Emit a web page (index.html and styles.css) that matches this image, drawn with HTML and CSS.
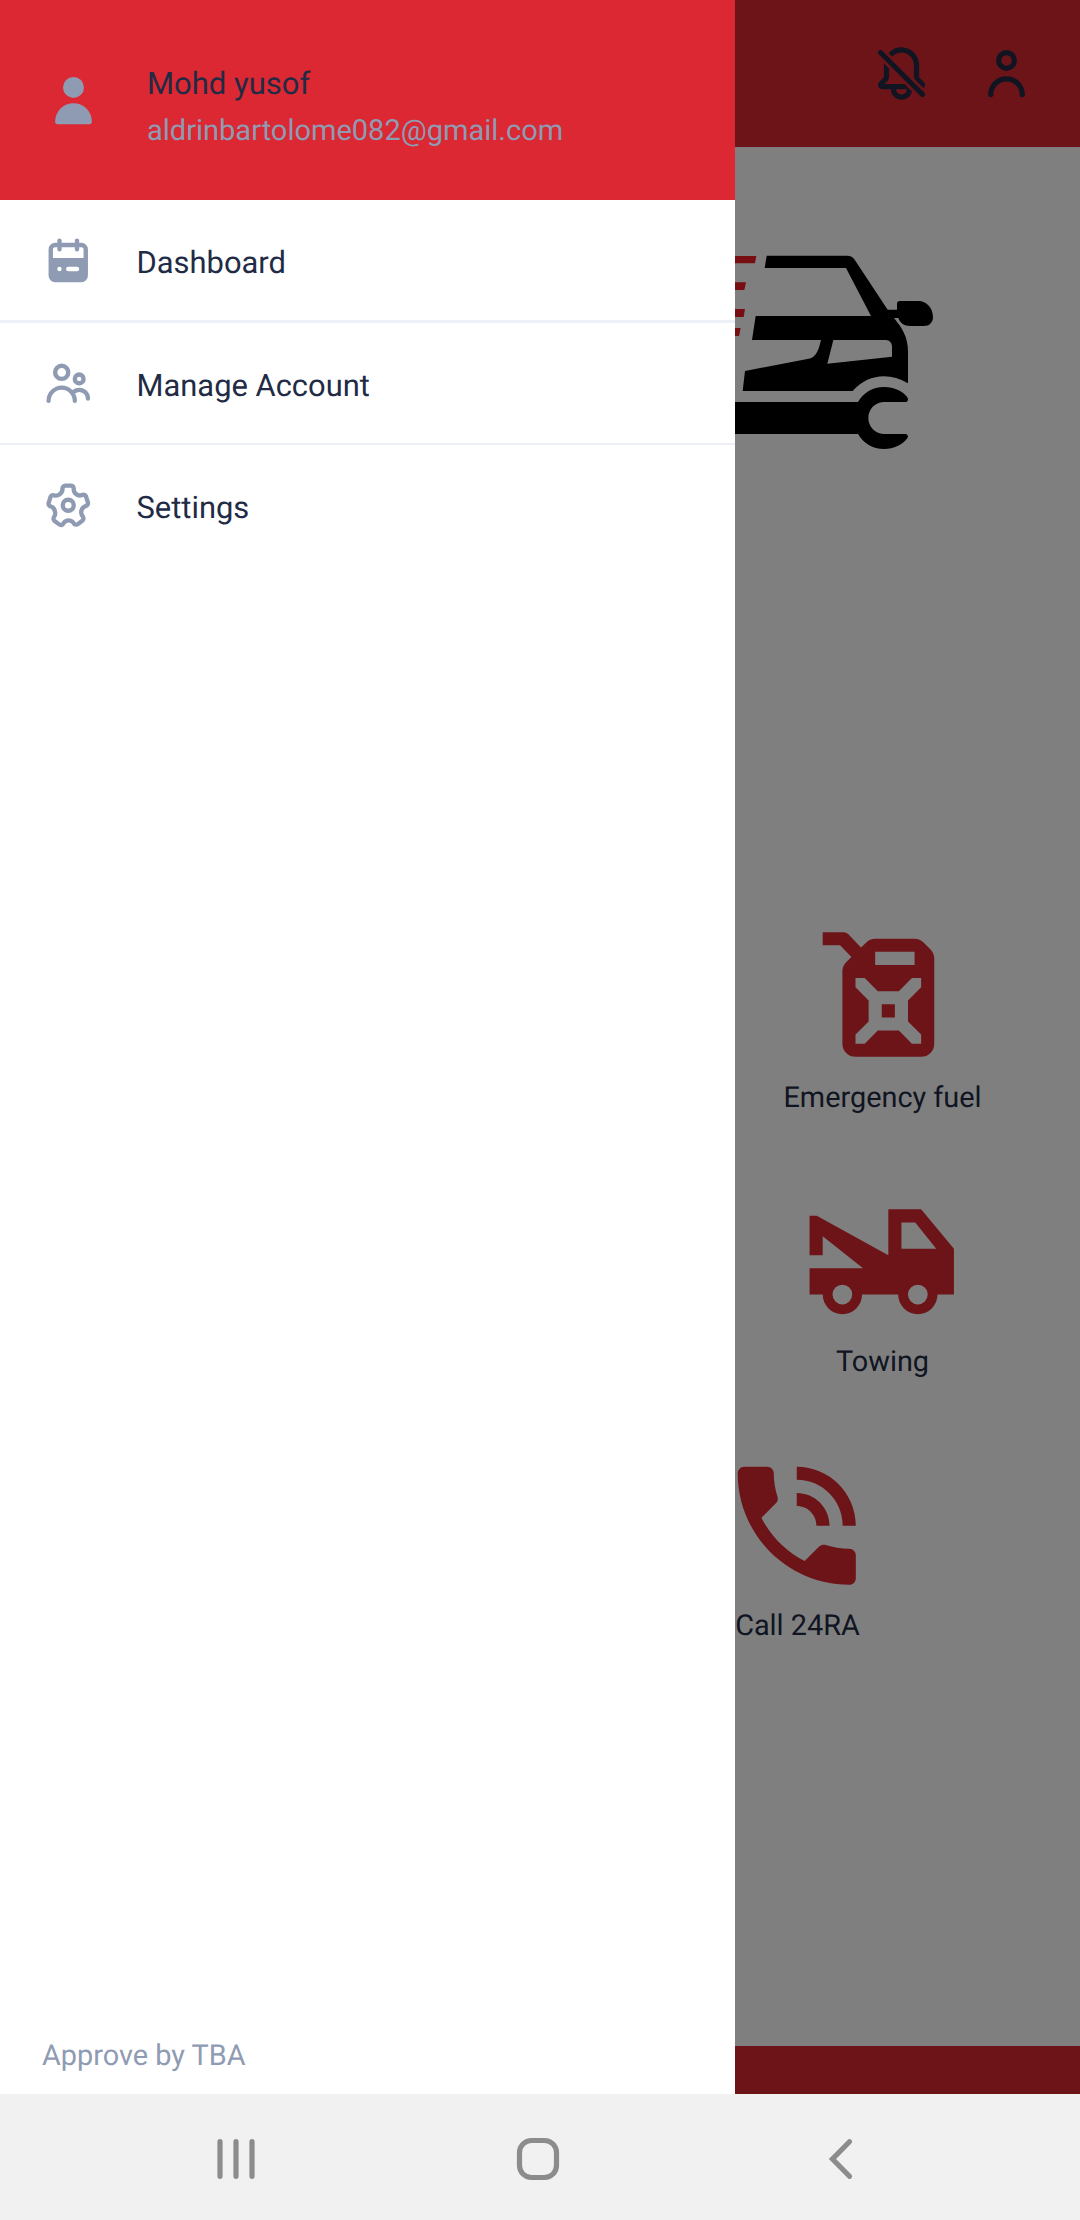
FILE: index.html
```html
<!DOCTYPE html>
<html lang="en">
<head>
<meta charset="utf-8">
<title>24RA Dashboard</title>
<link rel="stylesheet" href="styles.css">
</head>
<body>
<div class="app">
  <div class="screen">
    <header class="topbar">
      <svg class="icon-lg" viewBox="0 0 24 24"><path d="M8.9 5.17A4.67 4.67 0 0 1 12.64 4a4.86 4.86 0 0 1 4.08 4.9v4.5a1.92 1.92 0 0 0 .1.59l3.6 3.6a1.58 1.58 0 0 0 .45-.6 1.62 1.62 0 0 0-.35-1.78l-1.8-1.81V8.94a6.86 6.86 0 0 0-5.82-6.88 6.71 6.71 0 0 0-5.32 1.61 6.88 6.88 0 0 0-.58.54l1.47 1.43a4.79 4.79 0 0 1 .43-.47zM14 16.86l-.83-.86H5.51l1.18-1.18a2 2 0 0 0 .59-1.42v-3.29l-2-2a5.68 5.68 0 0 0 0 .59v4.7l-1.8 1.81A1.63 1.63 0 0 0 4.64 18H8v.34A3.84 3.84 0 0 0 12 22a3.88 3.88 0 0 0 4-3.22l-.83-.78zM12 20a1.88 1.88 0 0 1-2-1.66V18h4v.34A1.88 1.88 0 0 1 12 20zM20.71 19.29l-16-16a1 1 0 0 0-1.42 1.42l16 16a1 1 0 0 0 1.42 0 1 1 0 0 0 0-1.42z"/></svg>
      <svg class="icon-lg" viewBox="0 0 24 24"><path d="M12 11a4 4 0 1 0-4-4 4 4 0 0 0 4 4zm0-6a2 2 0 1 1-2 2 2 2 0 0 1 2-2zm0 8a7 7 0 0 0-7 7 1 1 0 0 0 2 0 5 5 0 0 1 10 0 1 1 0 0 0 2 0 7 7 0 0 0-7-7z"/></svg>
    </header>
    <div class="hero">
      <svg class="logo" viewBox="0 0 690 690">
        <g class="speed">
          <path d="M0 48H109L105 70H0z"/>
          <path d="M0 127H78L73 150H0z"/>
          <path d="M0 207H75L71 231H0z"/>
          <path d="M0 264H62L57 288H0z"/>
        </g>
        <path d="M140 47H382Q396 47 404 59L503 209H531V191Q531 183 540 183H595C620 183 639 204 639 231C639 248 628 258 612 258H572C550 258 540 248 535 234H522C546 264 564 290 564 335V430C510 397 444 400 398 453H68L75 393L262 357C285 354 294 340 303 300H96L107 228H453L378 84H134zM340 300L322 371L516 350V318Q514 302 498 300z"/>
        <path d="M0 486H414C430 458 458 441 492 441C523 441 550 455 562 472Q567 481 559 486H490C465 487 445 508 445 534C445 560 465 581 490 582H558Q567 585 562 595C547 615 522 627 492 627C458 627 430 609 414 582H0z"/>
      </svg>
    </div>
    <main class="services">
      <div class="service">
        <svg viewBox="0 0 24 24"><path fill-rule="evenodd" d="M3 2H6.2a1 1 0 0 1 .68.3L8.84 4.34 9.6 3.6A2 2 0 0 1 11 3H17A2 2 0 0 1 18.4 3.6L19.4 4.6A2 2 0 0 1 20 6V19A2 2 0 0 1 18 21H8A2 2 0 0 1 6 19V7.9A2 2 0 0 1 6.6 6.55L7.37 5.8 5.65 4H3zM11 5V7H17V5zM8 9V10.4L10 12.4V15.6L8 17.6V19H9.4L11.4 17H14.6L16.6 19H18V17.6L16 15.6V12.4L18 10.4V9H16.6L14.6 11H11.4L9.4 9zM12 13H14V15H12z"/></svg>
        <span>Emergency fuel</span>
      </div>
      <div class="service">
        <svg viewBox="0 0 24 24"><path fill-rule="evenodd" d="M13 4H18L23 10V17H20.5a3 3 0 0 1-6 0H9a3 3 0 0 1-6 0H1V13H9.15L3 8.1V11H1V5H2.1L13 11zM15 6V10H20.3L17.1 6zM6 15.5a1.5 1.5 0 1 0 0 3 1.5 1.5 0 0 0 0-3zM17.5 15.5a1.5 1.5 0 1 0 0 3 1.5 1.5 0 0 0 0-3z"/></svg>
        <span>Towing</span>
      </div>
      <div class="service call">
        <svg viewBox="0 0 24 24"><path d="M20 15.5c-1.25 0-2.45-.2-3.57-.57-.35-.11-.74-.03-1.02.24l-2.2 2.2c-2.83-1.44-5.15-3.75-6.59-6.59l2.2-2.21c.28-.26.36-.65.25-1C8.7 6.45 8.5 5.25 8.5 4c0-.55-.45-1-1-1H4c-.55 0-1 .45-1 1 0 9.39 7.61 17 17 17 .55 0 1-.45 1-1v-3.5c0-.55-.45-1-1-1zM19 12h2c0-4.97-4.03-9-9-9v2c3.87 0 7 3.13 7 7zm-4 0h2c0-2.76-2.24-5-5-5v2c1.66 0 3 1.34 3 3z"/></svg>
        <span>Call 24RA</span>
      </div>
    </main>
    <footer class="bottombar"></footer>
  </div>
  <div class="scrim"></div>
  <aside class="drawer">
    <div class="profile">
      <svg class="icon-lg" viewBox="0 0 24 24"><path d="M12 11a4 4 0 1 0-4-4 4 4 0 0 0 4 4zm6 10a1 1 0 0 0 1-1 7 7 0 0 0-14 0 1 1 0 0 0 1 1z"/></svg>
      <div class="identity">
        <div class="name">Mohd yusof</div>
        <div class="email">aldrinbartolome082@gmail.com</div>
      </div>
    </div>
    <nav class="menu">
      <a class="item">
        <svg viewBox="0 0 24 24"><path d="M18 4h-1V3a1 1 0 0 0-2 0v1H9V3a1 1 0 0 0-2 0v1H6a3 3 0 0 0-3 3v12a3 3 0 0 0 3 3h12a3 3 0 0 0 3-3V7a3 3 0 0 0-3-3zM8 17a1 1 0 1 1 1-1 1 1 0 0 1-1 1zm8 0h-4a1 1 0 0 1 0-2h4a1 1 0 0 1 0 2zm3-6H5V7a1 1 0 0 1 1-1h1v1a1 1 0 0 0 2 0V6h6v1a1 1 0 0 0 2 0V6h1a1 1 0 0 1 1 1z"/></svg>
        <span>Dashboard</span>
      </a>
      <a class="item">
        <svg viewBox="0 0 24 24"><path d="M9 11a4 4 0 1 0-4-4 4 4 0 0 0 4 4zm0-6a2 2 0 1 1-2 2 2 2 0 0 1 2-2zM17 13a3 3 0 1 0-3-3 3 3 0 0 0 3 3zm0-4a1 1 0 1 1-1 1 1 1 0 0 1 1-1zM17 14a5 5 0 0 0-3.06 1.05A7 7 0 0 0 2 20a1 1 0 0 0 2 0 5 5 0 0 1 10 0 1 1 0 0 0 2 0 6.9 6.9 0 0 0-.86-3.35A3 3 0 0 1 20 19a1 1 0 0 0 2 0 5 5 0 0 0-5-5z"/></svg>
        <span>Manage Account</span>
      </a>
      <a class="item">
        <svg viewBox="0 0 24 24"><path d="M8.61 22a2.25 2.25 0 0 1-1.35-.46L5.19 20a2.37 2.37 0 0 1-.49-3.22 2.06 2.06 0 0 0 .23-1.86l-.06-.16a1.83 1.83 0 0 0-1.12-1.22h-.16a2.34 2.34 0 0 1-1.48-2.94L2.93 8a2.18 2.18 0 0 1 1.12-1.41 2.14 2.14 0 0 1 1.68-.12 1.93 1.93 0 0 0 1.78-.29l.13-.1a1.94 1.94 0 0 0 .73-1.51v-.24A2.32 2.32 0 0 1 10.66 2h2.55a2.26 2.26 0 0 1 1.6.67 2.37 2.37 0 0 1 .68 1.68v.28a1.76 1.76 0 0 0 .69 1.43l.11.08a1.74 1.74 0 0 0 1.59.26l.34-.11A2.26 2.26 0 0 1 21.1 7.8l.79 2.52a2.36 2.36 0 0 1-1.46 2.93l-.2.07A1.89 1.89 0 0 0 19 14.6a2 2 0 0 0 .25 1.65l.26.38a2.38 2.38 0 0 1-.5 3.23L17 21.41a2.24 2.24 0 0 1-3.22-.53l-.12-.17a1.75 1.75 0 0 0-1.5-.78 1.8 1.8 0 0 0-1.43.77l-.23.33A2.25 2.25 0 0 1 9 22a2 2 0 0 1-.39 0zM4.4 11.62a3.83 3.83 0 0 1 2.38 2.5v.12a4 4 0 0 1-.46 3.62.38.38 0 0 0 0 .51L8.47 20a.25.25 0 0 0 .37-.07l.23-.33a3.77 3.77 0 0 1 6.2 0l.12.18a.3.3 0 0 0 .18.12.25.25 0 0 0 .19-.05l2.06-1.56a.36.36 0 0 0 .07-.49l-.26-.38A4 4 0 0 1 17.1 14a3.92 3.92 0 0 1 2.49-2.61l.2-.07a.34.34 0 0 0 .19-.44l-.78-2.49a.35.35 0 0 0-.2-.19.21.21 0 0 0-.19 0l-.34.11a3.74 3.74 0 0 1-3.43-.57L15 7.65a3.76 3.76 0 0 1-1.49-3v-.31a.37.37 0 0 0-.1-.26.31.31 0 0 0-.21-.08h-2.54a.31.31 0 0 0-.29.33v.25a3.9 3.9 0 0 1-1.52 3.09l-.13.1a3.91 3.91 0 0 1-3.63.59.22.22 0 0 0-.14 0 .28.28 0 0 0-.12.15L4 11.12a.36.36 0 0 0 .22.45z"/><path d="M12 15.5a3.5 3.5 0 1 1 3.5-3.5 3.5 3.5 0 0 1-3.5 3.5zm0-5a1.5 1.5 0 1 0 1.5 1.5 1.5 1.5 0 0 0-1.5-1.5z"/></svg>
        <span>Settings</span>
      </a>
    </nav>
    <div class="approval">Approve by TBA</div>
  </aside>
</div>
<div class="sysnav">
  <svg viewBox="0 0 60 60"><path d="M14 12.7V47.3M30 12.7V47.3M46 12.7V47.3"/></svg>
  <svg viewBox="0 0 60 60"><rect x="9.5" y="11.5" width="37" height="37" rx="12"/></svg>
  <svg viewBox="0 0 60 60"><path d="M35.5 12.7L18.5 30L35.5 47.3"/></svg>
</div>
</body>
</html>
```
FILE: styles.css
```css
* {
  box-sizing: border-box;
}

body {
  margin: 0;
  width: 1080px;
  height: 2220px;
  display: flex;
  flex-direction: column;
  overflow: hidden;
  background: #fff;
  color: #222b45;
  font-family: Roboto, "Liberation Sans", sans-serif;
  font-size: 28.875px;
  text-rendering: geometricPrecision;
}

svg {
  display: block;
  flex: none;
}

.app {
  position: relative;
  height: 2094px;
}

.screen {
  height: 100%;
  display: flex;
  flex-direction: column;
}

.icon-lg {
  width: 63px;
  height: 63px;
}

/* Top bar */
.topbar {
  height: 147px;
  padding: 0 42px;
  display: flex;
  align-items: center;
  justify-content: flex-end;
  gap: 42px;
  background: #db2832;
  fill: #222b45;
}

.hero {
  height: 772px;
  padding: 93px 130px 0 0;
  display: flex;
  justify-content: flex-end;
}

.logo {
  width: 230px;
  height: 230px;
  fill: #000;
}

.speed {
  fill: #ed1c24;
}

/* Services */
.services {
  flex: 1;
  display: flex;
  flex-direction: column;
  align-items: flex-end;
}

.service {
  width: 395px;
  height: 264.2px;
  display: flex;
  flex-direction: column;
  align-items: center;
  fill: #db2832;
}

.service svg {
  width: 157.5px;
  height: 157.5px;
  margin-right: 2px;
}

.service span {
  line-height: 42px;
}

.call {
  margin-right: 85px;
}

.bottombar {
  height: 48px;
  background: #db2832;
}

/* Drawer */
.scrim {
  position: absolute;
  inset: 0;
  background: rgba(0, 0, 0, 0.5);
}

.drawer {
  position: absolute;
  top: 0;
  bottom: 0;
  left: 0;
  width: 735px;
  display: flex;
  flex-direction: column;
  background: #fff;
}

.profile {
  height: 200px;
  padding: 0 42px;
  display: flex;
  align-items: center;
  gap: 42px;
  background: #db2832;
  fill: #8f9bb3;
}

.identity {
  padding-top: 15px;
  line-height: 46px;
}

.name {
  font-size: 31px;
}

.email,
.approval {
  color: #8f9bb3;
}

.email {
  font-size: 29px;
  line-height: 48px;
}

.item {
  height: 122px;
  padding: 0 42px;
  display: flex;
  align-items: center;
  gap: 42px;
  border-top: 2px solid #edf1f7;
  font-size: 30.9px;
  fill: #8f9bb3;
}

.item:first-child {
  height: 120px;
  border-top: 0;
}

.item:nth-child(2) {
  height: 123px;
  border-top-width: 3px;
}

.item svg {
  width: 52.5px;
  height: 52.5px;
}

.item span {
  margin-top: 4px;
}

.approval {
  margin-top: auto;
  padding: 0 42px 18px;
  line-height: 40px;
}

/* System navigation */
.sysnav {
  height: 126px;
  padding: 4px 206px 0;
  display: flex;
  align-items: center;
  justify-content: space-between;
  background: #f1f1f1;
  fill: none;
  stroke: #8c8c8c;
  stroke-width: 5.2px;
  stroke-linecap: round;
}

.sysnav svg {
  width: 60px;
  height: 60px;
}
```
